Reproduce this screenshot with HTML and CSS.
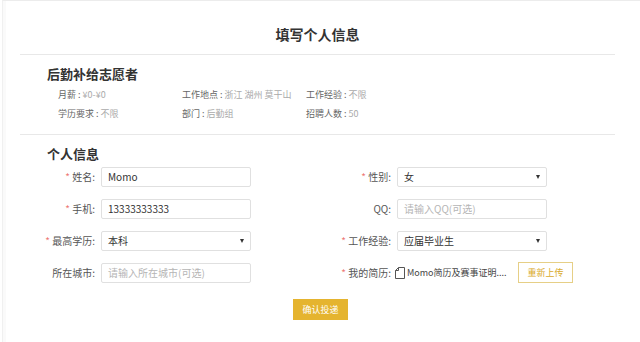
FILE: index.html
```html
<!DOCTYPE html>
<html>
<head>
	<meta charset="utf-8">
	<title>填写个人信息</title>
	<link rel="stylesheet" href="styles.css">
</head>
<body>
	<div class="p-page">
		<div class="p-title">填写个人信息</div>

		<div class="p-section p-job">
			<div class="p-heading">后勤补给志愿者</div>
			<div class="p-info">
				<div><span>月薪 : </span><em>¥0-¥0</em></div>
				<div><span>工作地点 : </span><em>浙江 湖州 莫干山</em></div>
				<div><span>工作经验 : </span><em>不限</em></div>
				<div><span>学历要求 : </span><em>不限</em></div>
				<div><span>部门 : </span><em>后勤组</em></div>
				<div><span>招聘人数 : </span><em>50</em></div>
			</div>
		</div>

		<div class="p-section p-person">
			<div class="p-heading">个人信息</div>
			<div class="p-form">
				<div class="p-row">
					<label><i>*</i> 姓名:</label>
					<div class="p-input">Momo</div>
				</div>
				<div class="p-row">
					<label><i>*</i> 性别:</label>
					<div class="p-input p-select">女</div>
				</div>
				<div class="p-row">
					<label><i>*</i> 手机:</label>
					<div class="p-input">13333333333</div>
				</div>
				<div class="p-row">
					<label>QQ:</label>
					<div class="p-input p-empty">请输入QQ(可选)</div>
				</div>
				<div class="p-row">
					<label><i>*</i> 最高学历:</label>
					<div class="p-input p-select">本科</div>
				</div>
				<div class="p-row">
					<label><i>*</i> 工作经验:</label>
					<div class="p-input p-select">应届毕业生</div>
				</div>
				<div class="p-row">
					<label>所在城市:</label>
					<div class="p-input p-empty">请输入所在城市(可选)</div>
				</div>
				<div class="p-row">
					<label><i>*</i> 我的简历:</label>
					<div class="p-file">
						<svg width="10" height="12" viewBox="0 0 10 12">
							<path d="M3.5 0.5 H9.5 V11.5 H0.5 V3.5 Z M0.5 3.5 H3.5 V0.5" fill="none" stroke="#555" stroke-width="1"/>
						</svg>
						<span>Momo简历及赛事证明....</span>
					</div>
					<div class="p-reupload">重新上传</div>
				</div>
			</div>
			<div class="p-submit-row">
				<div class="p-submit">确认投递</div>
			</div>
		</div>
	</div>
</body>
</html>
```

FILE: styles.css
```css
body {
	margin: 0;
	background-color: #fff;
	font-family: 'Noto Sans CJK SC', 'Noto Sans', sans-serif;
	color: #333;
}

.p-page {
	height: 342px;
	margin-left: 2px;
	border-left: 1px solid #f0f0f0;
	border-top: 1px solid #ececec;
	box-sizing: border-box;
	overflow: hidden;
	box-shadow: inset 3px 0 0 #fafafa;
}

.p-title {
	margin: 0 25px 0 17px;
	padding-top: 23px;
	height: 30px;
	border-bottom: 1px solid #e8e8e8;
	text-align: center;
	font-size: 14px;
	font-weight: bold;
	line-height: 20px;
	color: #333;
}

.p-section {
	margin: 0 25px 0 17px;
}

.p-job {
	height: 79px;
	border-bottom: 1px solid #e8e8e8;
}

.p-heading {
	padding-left: 27px;
	font-size: 13px;
	font-weight: bold;
	line-height: 18px;
	color: #333;
}

.p-job .p-heading {
	padding-top: 10px;
}

.p-info {
	display: grid;
	grid-template-columns: 124px 124px 124px;
	row-gap: 3px;
	padding: 4px 0 0 38px;
	font-size: 9px;
	line-height: 16px;
}

.p-info span {
	color: #666;
}

.p-info em {
	font-style: normal;
	color: #aaa;
}

.p-person .p-heading {
	padding-top: 10px;
}

.p-form {
	display: grid;
	grid-template-columns: 296px 296px;
	row-gap: 11px;
	padding-top: 3px;
}

.p-row {
	display: flex;
	align-items: center;
	gap: 6px;
	height: 21px;
}

.p-row label {
	width: 75px;
	text-align: right;
	font-size: 10px;
	color: #555;
}

.p-row label i {
	font-style: normal;
	color: #e77;
}

.p-input {
	position: relative;
	width: 150px;
	height: 20px;
	box-sizing: border-box;
	border: 1px solid #e0e0e0;
	border-radius: 2px;
	padding-left: 6px;
	font-size: 10px;
	line-height: 18px;
	color: #333;
}

.p-empty {
	color: #b5b5b5;
}

.p-select::after {
	content: '';
	position: absolute;
	right: 6px;
	top: 7px;
	border-left: 2px solid transparent;
	border-right: 2px solid transparent;
	border-top: 4px solid #333;
}

.p-file {
	display: flex;
	align-items: center;
	gap: 2px;
	width: 114px;
	flex-shrink: 0;
	margin-left: -2px;
	font-size: 9px;
	color: #444;
	white-space: nowrap;
}

.p-file svg {
	display: block;
	flex-shrink: 0;
}

.p-reupload {
	margin-left: 3px;
	width: 55px;
	height: 21px;
	box-sizing: border-box;
	border: 1px solid #e6cf86;
	text-align: center;
	font-size: 9px;
	line-height: 19px;
	color: #d9aa2c;
}

.p-submit-row {
	display: flex;
	justify-content: center;
	padding: 16px 0 0 6px;
}

.p-submit {
	width: 55px;
	height: 21px;
	background-color: #e5b42f;
	color: #fff;
	font-size: 9px;
	line-height: 21px;
	text-align: center;
}
```
